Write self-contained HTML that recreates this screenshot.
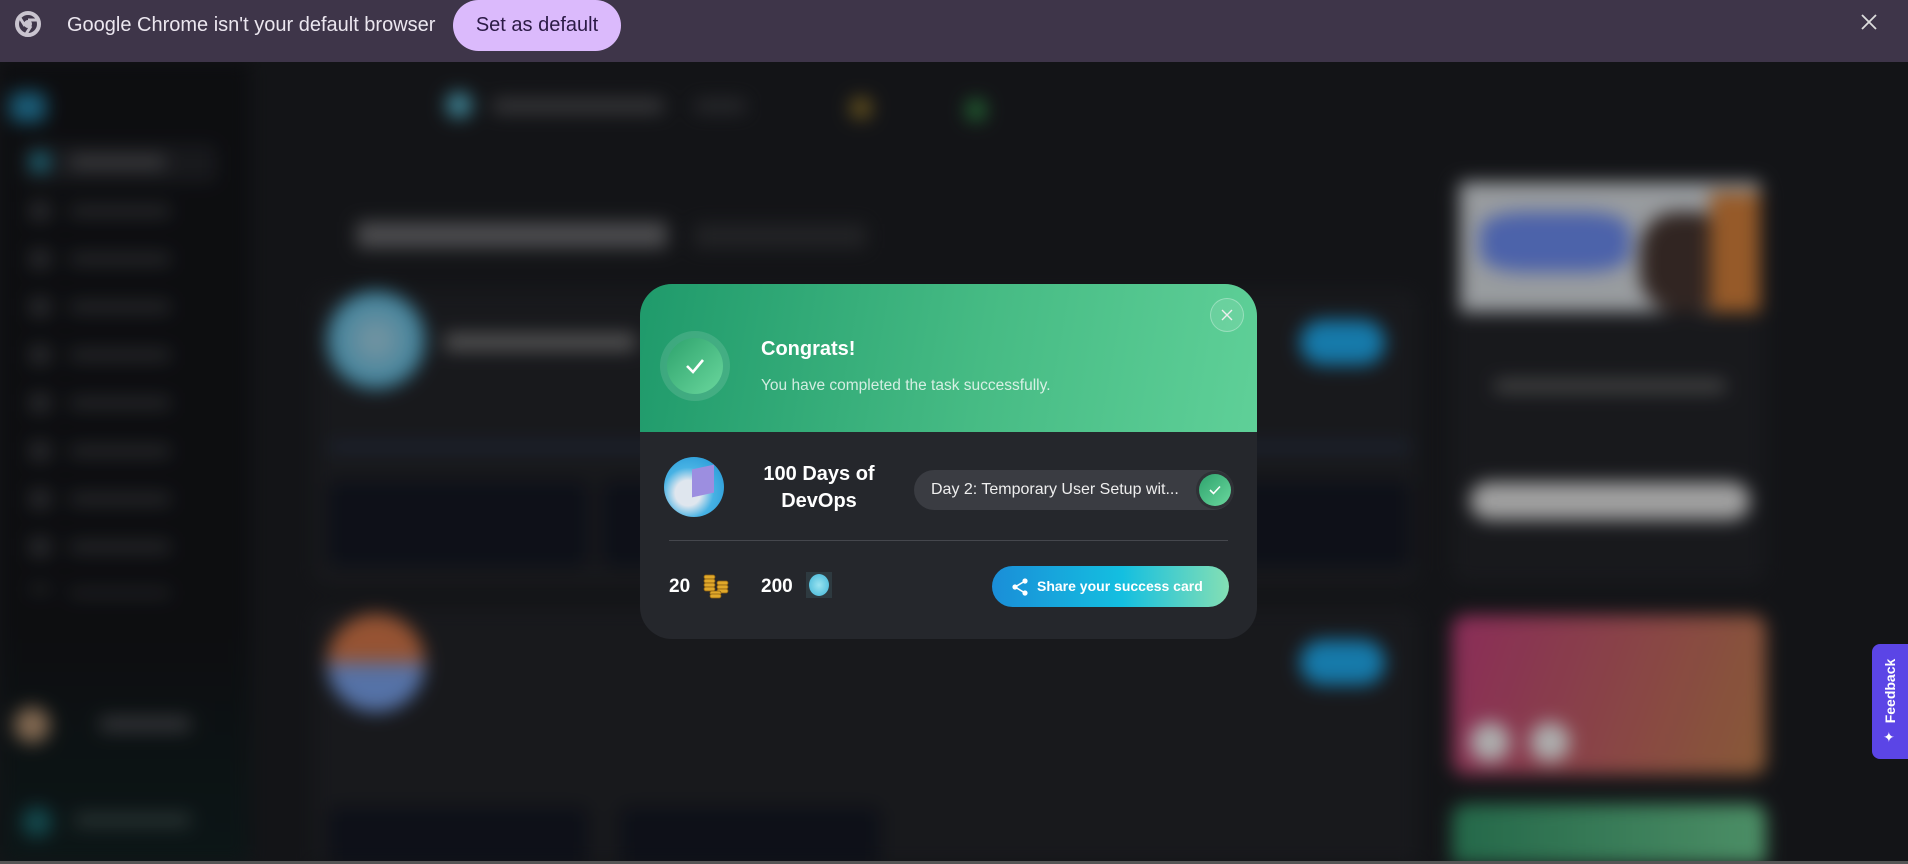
<!DOCTYPE html>
<html><head><meta charset="utf-8"><style>
*{margin:0;padding:0;box-sizing:border-box}
html,body{width:1908px;height:864px;overflow:hidden}
body{background:#131417;font-family:"Liberation Sans",sans-serif;position:relative}
.bar{position:absolute;left:0;top:0;width:1908px;height:62px;background:#3e3549;z-index:5}
.bg{position:absolute;left:0;top:62px;width:1908px;height:802px;filter:blur(9px) brightness(.85);overflow:hidden}
.a{position:absolute}
.m{position:absolute;left:640px;top:284px;width:617px;height:355px;border-radius:32px;background:#25272c;overflow:hidden;z-index:6;color:#fff}
</style></head><body>
<div class="bar">
 <svg class="a" style="left:14px;top:10px" width="28" height="28" viewBox="0 0 28 28"><circle cx="14" cy="14" r="11" fill="none" stroke="#c9c4cf" stroke-width="4"/><circle cx="14" cy="14" r="4" fill="#c9c4cf"/><path d="M14 10 L24 10 M11 16 L6 8 M17 16 L12 24" stroke="#c9c4cf" stroke-width="3"/></svg>
 <div class="a" style="left:67px;top:12px;font-size:20px;color:#ebe6ef;line-height:26px">Google Chrome isn't your default browser</div>
 <div class="a" style="left:453px;top:0;width:168px;height:51px;border-radius:26px;background:#dbbafc;color:#2b1a45;font-size:20px;line-height:50px;text-align:center">Set as default</div>
 <svg class="a" style="left:1861px;top:14px" width="16" height="16" viewBox="0 0 16 16"><path d="M1 1 L15 15 M15 1 L1 15" stroke="#ddd" stroke-width="1.8"/></svg>
</div>
<div class="bg">
 <div class="a" style="left:0;top:0;width:250px;height:802px;background:#0f1013"></div>
 <div class="a" style="left:0;top:560px;width:250px;height:242px;background:linear-gradient(#0f1013,#0e1a1b)"></div>
 <div class="a" style="left:10px;top:30px;width:36px;height:30px;border-radius:8px;background:#1f6d8d"></div>
 <div class="a" style="left:22px;top:82px;width:195px;height:39px;border-radius:6px;background:#1c1d21"></div>
 <div class="a" style="left:30px;top:90px;width:20px;height:20px;border-radius:50%;background:#1f7f95"></div>
 <div class="a" style="left:70px;top:94px;width:95px;height:12px;background:#4a4a4d"></div>
 <div class="a" style="left:30px;top:140px;width:20px;height:390px;background:repeating-linear-gradient(#333438 0 18px,transparent 18px 48px)"></div>
 <div class="a" style="left:70px;top:144px;width:100px;height:390px;background:repeating-linear-gradient(#333438 0 10px,transparent 10px 48px)"></div>
 <div class="a" style="left:14px;top:645px;width:36px;height:36px;border-radius:50%;background:#9a7c60"></div>
 <div class="a" style="left:100px;top:655px;width:90px;height:14px;background:#404145"></div>
 <div class="a" style="left:22px;top:745px;width:30px;height:30px;border-radius:50%;background:#17575c"></div>
 <div class="a" style="left:75px;top:752px;width:115px;height:12px;background:#33403f"></div>
 <div class="a" style="left:446px;top:30px;width:26px;height:26px;border-radius:50%;background:#4a9bb0"></div>
 <div class="a" style="left:493px;top:38px;width:170px;height:12px;background:#4a4a4d"></div>
 <div class="a" style="left:695px;top:38px;width:50px;height:12px;background:#333438"></div>
 <div class="a" style="left:850px;top:35px;width:22px;height:22px;border-radius:50%;background:#7a6324"></div>
 <div class="a" style="left:966px;top:37px;width:20px;height:22px;border-radius:50%;background:#2a7a3e"></div>
 <div class="a" style="left:357px;top:160px;width:310px;height:26px;background:#5a5a5d"></div>
 <div class="a" style="left:694px;top:162px;width:172px;height:24px;background:#28292c"></div>
 <div class="a" style="left:314px;top:228px;width:1104px;height:294px;border-radius:12px;background:#1c1d21"></div>
 <div class="a" style="left:327px;top:229px;width:98px;height:98px;border-radius:50%;background:radial-gradient(#8fb0be,#2a8fb5)"></div>
 <div class="a" style="left:445px;top:272px;width:190px;height:16px;background:#666"></div>
 <div class="a" style="left:1300px;top:258px;width:85px;height:45px;border-radius:24px;background:#1a8fc8"></div>
 <div class="a" style="left:330px;top:382px;width:1080px;height:6px;background:#23324a"></div>
 <div class="a" style="left:328px;top:419px;width:260px;height:86px;border-radius:8px;background:#10131c"></div>
 <div class="a" style="left:602px;top:419px;width:260px;height:86px;border-radius:8px;background:#10131c"></div>
 <div class="a" style="left:1150px;top:419px;width:260px;height:86px;border-radius:8px;background:#10131c"></div>
 <div class="a" style="left:314px;top:546px;width:1104px;height:300px;border-radius:12px;background:#1c1d21"></div>
 <div class="a" style="left:327px;top:552px;width:98px;height:98px;border-radius:50%;background:linear-gradient(#b0623c 45%,#6486c4 55%)"></div>
 <div class="a" style="left:1300px;top:578px;width:85px;height:45px;border-radius:24px;background:#1a8fc8"></div>
 <div class="a" style="left:328px;top:745px;width:260px;height:90px;border-radius:8px;background:#10131c"></div>
 <div class="a" style="left:620px;top:745px;width:260px;height:90px;border-radius:8px;background:#10131c"></div>
 <div class="a" style="left:1452px;top:118px;width:314px;height:404px;border-radius:14px;background:#1c1d21"></div>
 <div class="a" style="left:1460px;top:120px;width:300px;height:130px;background:#b3b7bb"></div>
 <div class="a" style="left:1480px;top:150px;width:150px;height:60px;border-radius:30%;background:#5a74c8"></div>
 <div class="a" style="left:1640px;top:150px;width:90px;height:100px;border-radius:40%;background:#3a2c28"></div>
 <div class="a" style="left:1710px;top:130px;width:50px;height:120px;background:#b06a30"></div>
 <div class="a" style="left:1495px;top:318px;width:230px;height:12px;background:#555"></div>
 <div class="a" style="left:1470px;top:420px;width:280px;height:38px;border-radius:20px;background:#bcbcbc"></div>
 <div class="a" style="left:1452px;top:553px;width:314px;height:160px;border-radius:14px;background:linear-gradient(110deg,#a23468,#a06a40)"></div>
 <div class="a" style="left:1470px;top:660px;width:40px;height:40px;border-radius:50%;background:#ccc"></div>
 <div class="a" style="left:1530px;top:660px;width:40px;height:40px;border-radius:50%;background:#ccc"></div>
 <div class="a" style="left:1452px;top:742px;width:314px;height:80px;border-radius:14px;background:linear-gradient(90deg,#2a7a56,#5aa878)"></div>
</div>
<div class="a" style="left:0;top:861px;width:1908px;height:3px;background:#555;z-index:9"></div>
<div class="m">
 <div class="a" style="left:0;top:0;width:617px;height:148px;background:linear-gradient(100deg,#1f9a6b,#46bb84 55%,#5fd098)"></div>
 <div class="a" style="left:20px;top:47px;width:70px;height:70px;border-radius:50%;background:rgba(255,255,255,.12)"></div>
 <div class="a" style="left:27px;top:54px;width:56px;height:56px;border-radius:50%;background:linear-gradient(135deg,#2ea36d,#6ad79d)"></div>
 <svg class="a" style="left:40px;top:67px" width="30" height="30" viewBox="0 0 30 30"><path d="M7 15 L13 21 L23 9" fill="none" stroke="#fff" stroke-width="2.6"/></svg>
 <div class="a" style="left:121px;top:54px;font-size:20px;font-weight:bold">Congrats!</div>
 <div class="a" style="left:121px;top:93px;font-size:15.5px;color:rgba(255,255,255,.78)">You have completed the task successfully.</div>
 <div class="a" style="left:570px;top:14px;width:34px;height:34px;border-radius:50%;border:1px solid rgba(255,255,255,.3);background:rgba(255,255,255,.1)"></div>
 <svg class="a" style="left:581px;top:25px" width="12" height="12" viewBox="0 0 12 12"><path d="M1 1 L11 11 M11 1 L1 11" stroke="#eee" stroke-width="1.4"/></svg>
 <div class="a" style="left:24px;top:173px;width:60px;height:60px;border-radius:50%;background:radial-gradient(circle at 40% 60%,#dfe6ee 25%,#47b2e4 50%,#1b8fd2)"></div>
 <div class="a" style="left:52px;top:183px;width:22px;height:28px;background:#9c8ee0;transform:skewY(-12deg)"></div>
 <div class="a" style="left:114px;top:177px;width:130px;text-align:center;font-size:20px;font-weight:bold;line-height:27px">100 Days of<br>DevOps</div>
 <div class="a" style="left:274px;top:186px;width:320px;height:40px;border-radius:20px;background:#3a3c42"></div>
 <div class="a" style="left:291px;top:197px;font-size:16px;color:#eee">Day 2: Temporary User Setup wit...</div>
 <div class="a" style="left:556px;top:187px;width:38px;height:38px;border-radius:50%;background:#2f3136"></div>
 <div class="a" style="left:559px;top:190px;width:32px;height:32px;border-radius:50%;background:linear-gradient(135deg,#2ea36d,#6ad79d)"></div>
 <svg class="a" style="left:567px;top:198px" width="16" height="16" viewBox="0 0 16 16"><path d="M3 8 L6.5 11.5 L13 4.5" fill="none" stroke="#fff" stroke-width="1.6"/></svg>
 <div class="a" style="left:29px;top:256px;width:559px;height:1px;background:#45474d"></div>
 <div class="a" style="left:29px;top:292px;font-size:19px;font-weight:bold">20</div>
 <svg class="a" style="left:62px;top:289px" width="28" height="26" viewBox="0 0 28 26"><g fill="#e0a82a" stroke="#8a5e10" stroke-width=".8"><rect x="2" y="2" width="11" height="4" rx="2"/><rect x="2" y="6" width="11" height="4" rx="2"/><rect x="2" y="10" width="11" height="4" rx="2"/><rect x="2" y="14" width="11" height="4" rx="2"/><rect x="15" y="8" width="11" height="4" rx="2"/><rect x="15" y="12" width="11" height="4" rx="2"/><rect x="15" y="16" width="11" height="4" rx="2"/><rect x="8" y="18" width="11" height="4" rx="2"/><rect x="8" y="21" width="11" height="4" rx="2"/></g></svg>
 <div class="a" style="left:121px;top:292px;font-size:19px;font-weight:bold">200</div>
 <div class="a" style="left:166px;top:288px;width:26px;height:26px;background:#2e3a40"></div>
 <div class="a" style="left:169px;top:290px;width:20px;height:22px;border-radius:50%;background:radial-gradient(#9ae3f0,#3fb5d8)"></div>
 <div class="a" style="left:352px;top:282px;width:237px;height:41px;border-radius:21px;background:linear-gradient(90deg,#1a8ed8,#14bfe0 55%,#84dfb4)"></div>
 <svg class="a" style="left:370px;top:293px" width="20" height="20" viewBox="0 0 20 20"><g fill="#fff"><circle cx="15" cy="4" r="2.6"/><circle cx="5" cy="10" r="2.6"/><circle cx="15" cy="16" r="2.6"/></g><path d="M15 4 L5 10 L15 16" stroke="#fff" stroke-width="1.6" fill="none"/></svg>
 <div class="a" style="left:397px;top:294px;font-size:14px;font-weight:bold">Share your success card</div>
</div>
<div class="a" style="left:1872px;top:644px;width:40px;height:115px;border-radius:8px 0 0 8px;background:#5b45e6;z-index:7"></div>
<div class="a" style="left:1840px;top:681px;width:100px;height:20px;z-index:8;color:#fff;font-size:14px;font-weight:bold;transform:rotate(-90deg);white-space:nowrap;line-height:20px;text-align:center">Feedback</div>
<div class="a" style="left:1883px;top:729px;color:#fff;font-size:14px;z-index:8">✦</div>
</body></html>
